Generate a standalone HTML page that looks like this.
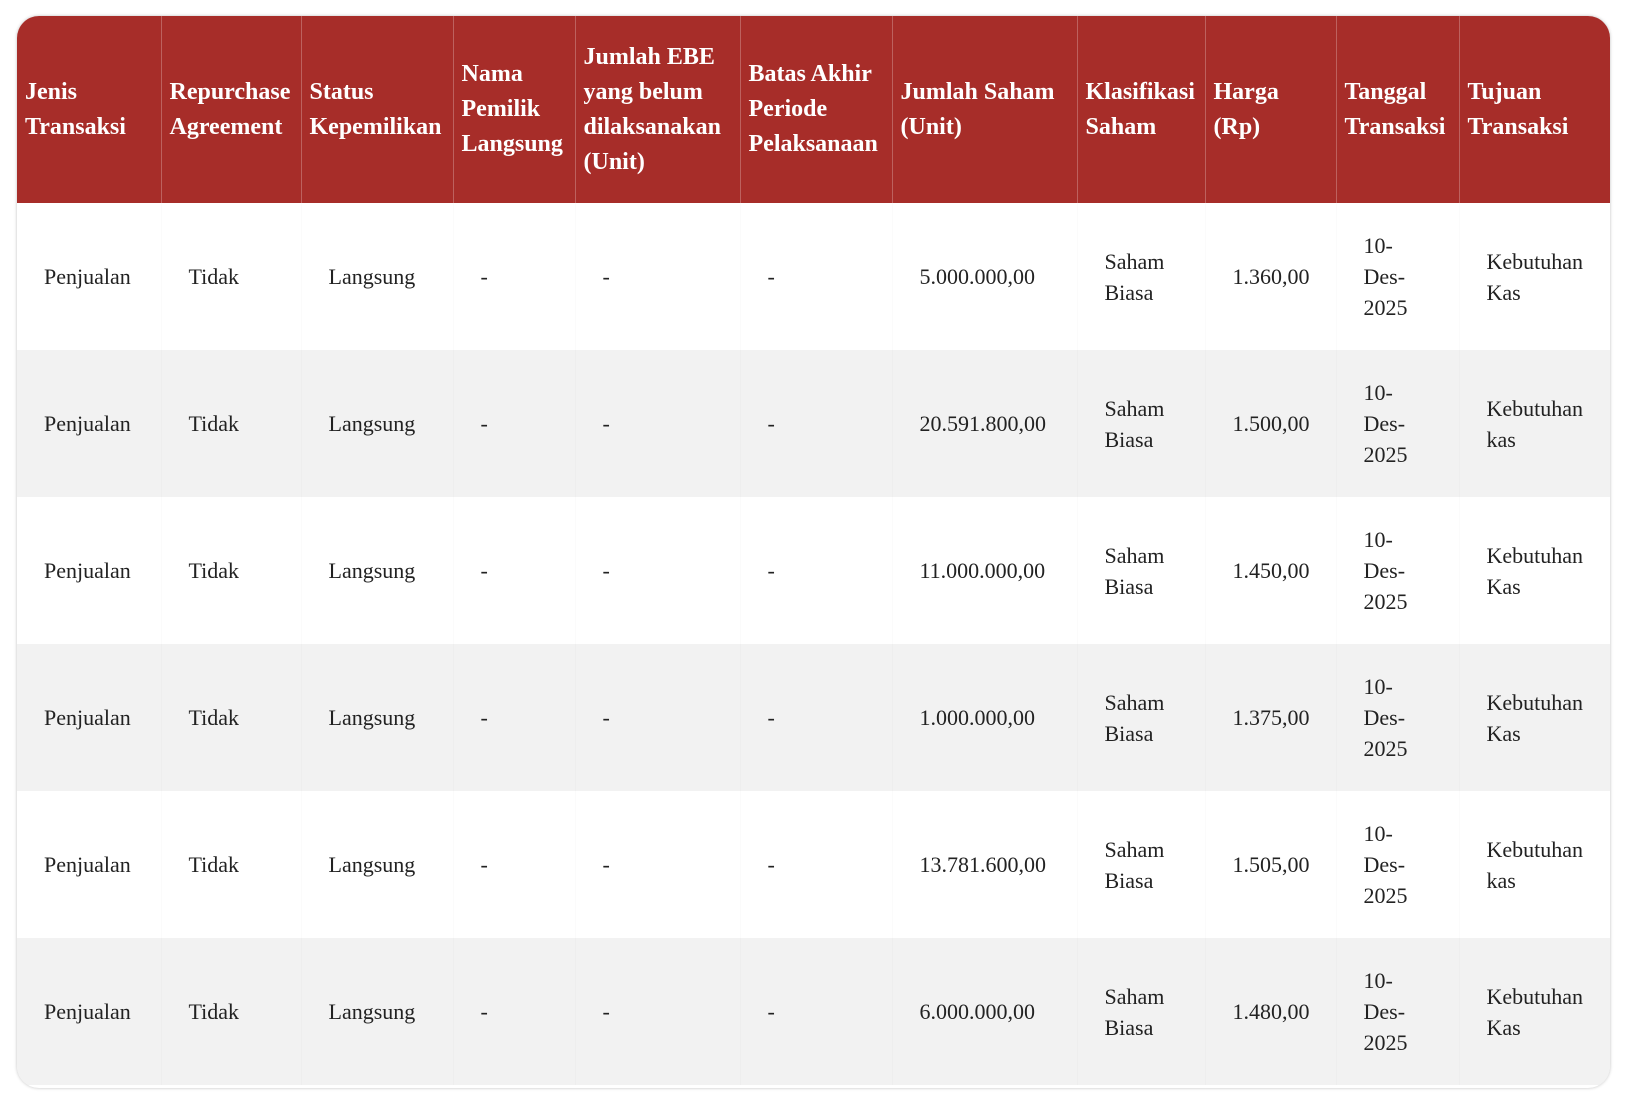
<!DOCTYPE html>
<html><head><meta charset="utf-8"><style>
html,body{margin:0;padding:0;background:#fff;width:1628px;height:1110px;overflow:hidden}
.wrap{position:absolute;left:17px;top:16px;width:1593px;height:1072px;border-radius:22px;overflow:hidden;box-shadow:0 0 3px rgba(0,0,0,0.25)}
table{border-collapse:collapse;table-layout:fixed;width:1593px;font-family:"Liberation Serif",serif;color:#222}
th{background:#a72d29;color:#fff;font-weight:bold;font-size:24px;line-height:35px;text-align:left;padding:0 8px;height:187px;vertical-align:middle;border-left:1px solid rgba(255,255,255,0.25)}
th:first-child{border-left:none}
td{font-size:22px;line-height:31px;padding:0 8px 0 27px;height:147px;vertical-align:middle;border-left:1px solid rgba(0,0,0,0.015)}
td:first-child{border-left:none}
tr:nth-child(even) td{background:#f2f2f2}
</style></head><body><div class="wrap"><table>
<colgroup><col style="width:144px"><col style="width:140px"><col style="width:152px"><col style="width:122px"><col style="width:165px"><col style="width:152px"><col style="width:185px"><col style="width:128px"><col style="width:131px"><col style="width:123px"><col style="width:151px"></colgroup>
<thead><tr><th>Jenis Transaksi</th><th>Repurchase Agreement</th><th>Status Kepemilikan</th><th>Nama Pemilik Langsung</th><th>Jumlah EBE yang belum dilaksanakan (Unit)</th><th>Batas Akhir Periode Pelaksanaan</th><th>Jumlah Saham (Unit)</th><th>Klasifikasi Saham</th><th>Harga (Rp)</th><th>Tanggal Transaksi</th><th>Tujuan Transaksi</th></tr></thead>
<tbody>
<tr><td>Penjualan</td><td>Tidak</td><td>Langsung</td><td>-</td><td>-</td><td>-</td><td>5.000.000,00</td><td>Saham Biasa</td><td>1.360,00</td><td>10-<br>Des-<br>2025</td><td>Kebutuhan Kas</td></tr>
<tr><td>Penjualan</td><td>Tidak</td><td>Langsung</td><td>-</td><td>-</td><td>-</td><td>20.591.800,00</td><td>Saham Biasa</td><td>1.500,00</td><td>10-<br>Des-<br>2025</td><td>Kebutuhan kas</td></tr>
<tr><td>Penjualan</td><td>Tidak</td><td>Langsung</td><td>-</td><td>-</td><td>-</td><td>11.000.000,00</td><td>Saham Biasa</td><td>1.450,00</td><td>10-<br>Des-<br>2025</td><td>Kebutuhan Kas</td></tr>
<tr><td>Penjualan</td><td>Tidak</td><td>Langsung</td><td>-</td><td>-</td><td>-</td><td>1.000.000,00</td><td>Saham Biasa</td><td>1.375,00</td><td>10-<br>Des-<br>2025</td><td>Kebutuhan Kas</td></tr>
<tr><td>Penjualan</td><td>Tidak</td><td>Langsung</td><td>-</td><td>-</td><td>-</td><td>13.781.600,00</td><td>Saham Biasa</td><td>1.505,00</td><td>10-<br>Des-<br>2025</td><td>Kebutuhan kas</td></tr>
<tr><td>Penjualan</td><td>Tidak</td><td>Langsung</td><td>-</td><td>-</td><td>-</td><td>6.000.000,00</td><td>Saham Biasa</td><td>1.480,00</td><td>10-<br>Des-<br>2025</td><td>Kebutuhan Kas</td></tr>
</tbody></table></div></body></html>
